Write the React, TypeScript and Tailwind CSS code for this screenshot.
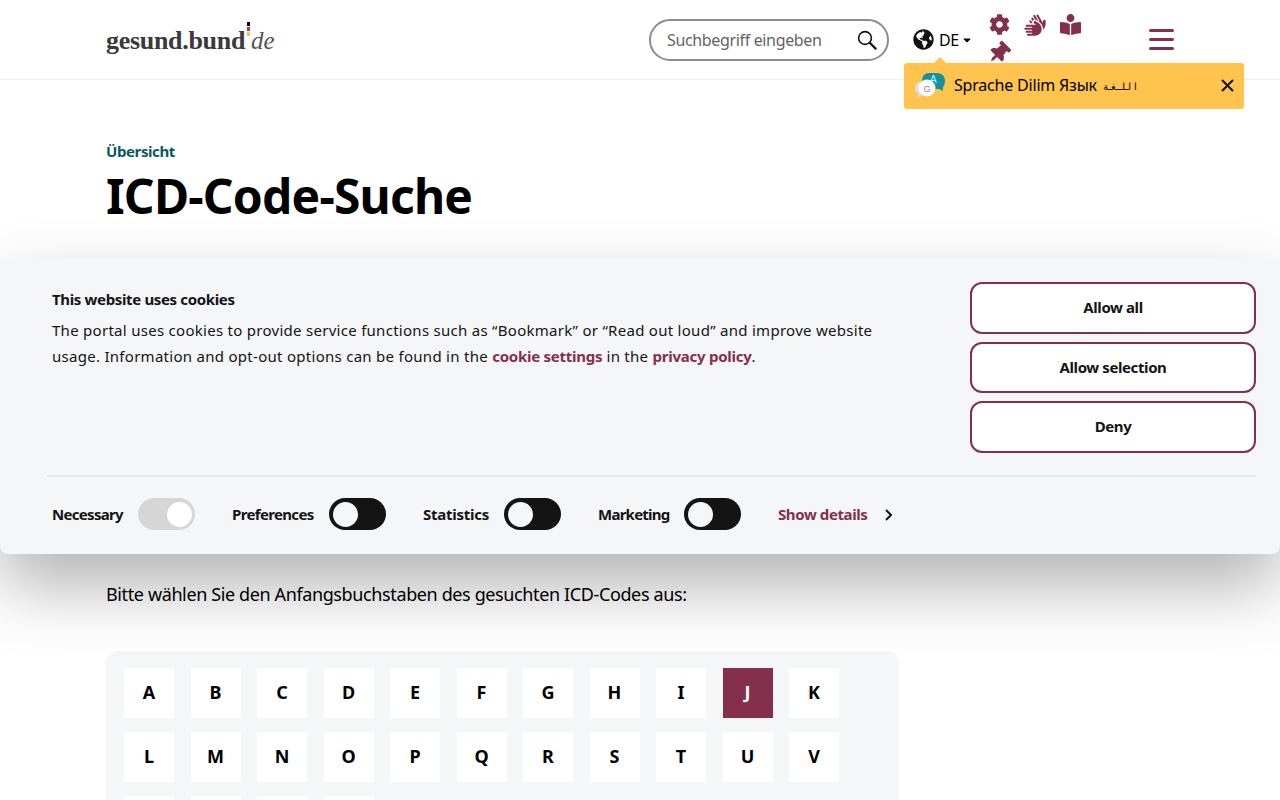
import { FaCog, FaBookReader, FaThumbtack, FaGlobeAmericas, FaCaretDown } from 'react-icons/fa'
import { FaHands } from 'react-icons/fa6'

const LETTERS = ['A','B','C','D','E','F','G','H','I','J','K','L','M','N','O','P','Q','R','S','T','U','V','W','X','Y','Z']

function Toggle({ disabled }: { disabled?: boolean }) {
  if (disabled) {
    return (
      <span className="flex h-8 w-[57px] items-center justify-end rounded-full bg-[#d6d6d6] pr-[3px]">
        <span className="h-[25px] w-[25px] rounded-full bg-white" />
      </span>
    )
  }
  return (
    <span className="flex h-8 w-[57px] items-center rounded-full bg-[#141414] pl-1">
      <span className="h-[25px] w-[25px] rounded-full bg-[#f5f6f8]" />
    </span>
  )
}

function CookieButton({ label }: { label: string }) {
  return (
    <button className="flex h-[51.5px] w-[286px] items-center justify-center rounded-xl border-2 border-[#84304c] bg-white pb-[1px] text-[15px] font-bold tracking-[-0.4px] text-[#141414]">
      {label}
    </button>
  )
}

function ToggleItem({ label, className, disabled }: { label: string; className: string; disabled?: boolean }) {
  return (
    <div className={`flex items-center justify-between pr-[37px] ${className}`}>
      <span className="text-[15px] font-bold text-[#141414]">{label}</span>
      <Toggle disabled={disabled} />
    </div>
  )
}

function TranslateIcon() {
  return (
    <svg width="32" height="28" viewBox="0 0 32 28" className="shrink-0">
      <path d="M15 1h8c5 0 8 3 8 8 0 3-1 5-2 6v4l-4-2H16c-5 0-8-4-8-8 0-5 3-8 7-8z" fill="#12929f" />
      <text x="16" y="11" fontSize="10" fill="#d8f2f5" fontFamily="Liberation Sans, sans-serif">A</text>
      <path d="M7 10c-4 0-6 3-6 6 0 3 1 5 3 6v4l4-3h4V10z" fill="#dedede" />
      <circle cx="13" cy="16" r="8.5" fill="#ffffff" />
      <text x="9.5" y="19.5" fontSize="9" fill="#8a84b8" fontFamily="Liberation Sans, sans-serif">G</text>
    </svg>
  )
}

export default function App() {
  return (
    <div className="relative h-[800px] overflow-hidden bg-white font-['Noto_Sans',sans-serif] text-black">
      {/* Header */}
      <header className="flex h-20 items-center border-b border-[#eeeeee] pl-[106px]">
        <a className="relative flex w-[169px] items-baseline pt-[1px] font-['Liberation_Serif',serif] text-[#3a3a3a]">
          <span className="text-[26px] font-bold tracking-[-0.3px]">gesund.bund</span>
          <span className="ml-[6px] text-[25px] italic text-[#555555]">de</span>
          <span className="absolute left-[141px] top-[2px] flex w-[3px] flex-col gap-[1px]">
            <span className="h-[4px] bg-black" />
            <span className="h-[4px] bg-[#c8382c]" />
            <span className="h-[4px] bg-[#f0c64a]" />
          </span>
        </a>

        <div className="ml-[374px] flex h-[42px] w-[240px] items-center justify-between rounded-full border-2 border-[#8c8c8c] pl-[16px] pr-[10px]">
          <span className="text-[16px] tracking-[-0.35px] text-[#646464]">Suchbegriff eingeben</span>
          <svg width="20" height="20" viewBox="0 0 20 20" fill="none" stroke="#111" strokeWidth="1.6">
            <circle cx="8" cy="8" r="6.4" />
            <path d="M12.8 12.8L18.6 18.6" strokeWidth="2.2" strokeLinecap="round" />
          </svg>
        </div>

        <div className="ml-[24px] flex w-[71px] items-center">
          <FaGlobeAmericas className="h-[21px] w-[21px] shrink-0 text-[#111]" />
          <span className="ml-[5px] text-[16px] tracking-[-0.5px]">DE</span>
          <FaCaretDown className="ml-[2px] h-[12px] w-[12px]" />
        </div>

        <div className="-ml-[2px] grid w-[107px] -translate-y-[1px] grid-cols-3 gap-y-[6px] text-[#84304c]">
          <span className="flex h-[22px] w-[35px] items-center justify-center"><FaCog className="h-[21px] w-[21px]" /></span>
          <span className="flex h-[22px] w-[35px] items-center justify-center"><FaHands className="h-[22px] w-[24px]" /></span>
          <span className="flex h-[22px] w-[35px] items-center justify-center"><FaBookReader className="h-[21px] w-[21px]" /></span>
          <span className="flex h-[22px] w-[35px] items-center justify-center"><FaThumbtack className="h-[22px] w-[22px] -translate-x-[1px] rotate-45" /></span>
        </div>

        <div className="ml-[60px] flex w-[25px] flex-col gap-[6px]">
          <span className="h-[3px] rounded-full bg-[#84304c]" />
          <span className="h-[3px] rounded-full bg-[#84304c]" />
          <span className="h-[3px] rounded-full bg-[#84304c]" />
        </div>
      </header>

      {/* Language hint */}
      <div className="absolute left-[904px] top-[63px] flex h-[46px] w-[340px] items-center rounded-[3px] bg-[#ffc44d] pl-[10px] pr-[10px]">
        <span className="absolute -top-[6px] left-[30px] h-0 w-0 border-x-[6px] border-b-[6px] border-x-transparent border-b-[#ffc44d]" />
        <TranslateIcon />
        <span className="ml-[8px] pb-[2px] text-[16px] tracking-[-0.2px]">Sprache Dilim Язык</span>
        <span className="ml-[6px] font-['DejaVu_Sans',sans-serif] text-[10px] font-light" dir="rtl">ا لـلــغـة</span>
        <svg width="13" height="13" viewBox="0 0 13 13" className="mb-[2px] ml-auto" stroke="#111" strokeWidth="2">
          <path d="M1 1l11 11M12 1L1 12" />
        </svg>
      </div>

      {/* Page content */}
      <main className="px-[106px] pt-[61px]">
        <p className="text-[15px] font-bold leading-5 tracking-[-0.4px] text-[#0a5a5a]">Übersicht</p>
        <h1 className="mt-[7px] text-[48px] font-bold leading-[56px] tracking-[-0.8px]">ICD-Code-Suche</h1>
        <p className="mt-[356px] text-[18px] leading-7 tracking-[-0.38px]">Bitte wählen Sie den Anfangsbuchstaben des gesuchten ICD-Codes aus:</p>
        <div className="mt-[43px] w-[793px] rounded-xl bg-[#f5f6f8] pl-[18px] pt-[17px]">
          <div className="grid grid-cols-[repeat(11,50px)] gap-x-[16.5px] gap-y-[14px]">
            {LETTERS.map(l => (
              <a
                key={l}
                className={`flex h-[50px] w-[50px] items-center justify-center pb-[2px] text-[18px] font-bold ${l === 'J' ? 'bg-[#84304c] text-white' : 'bg-white text-black'}`}
              >
                {l}
              </a>
            ))}
          </div>
        </div>
      </main>

      {/* Cookie banner */}
      <section className="absolute left-0 right-0 top-[258px] h-[296px] rounded-lg bg-[#f5f6f8] pl-[47px] pr-[24px] shadow-[0_32px_68px_rgba(0,0,0,0.3)]">
        <div className="flex h-[219px] items-start justify-between border-b-2 border-[#e6e7ea]">
          <div className="w-[860px] pl-[5px] pt-[31px] text-[#141414]">
            <h2 className="text-[15px] font-bold leading-5 tracking-[-0.35px]">This website uses cookies</h2>
            <p className="mt-[8px] text-[15px] leading-[26px] tracking-[0.28px]">
              The portal uses cookies to provide service functions such as “Bookmark” or “Read out loud” and improve website usage. Information and opt-out options can be found in the{' '}
              <a className="font-bold tracking-[-0.25px] text-[#84304c]">cookie settings</a> in the{' '}
              <a className="font-bold tracking-[-0.25px] text-[#84304c]">privacy policy</a>.
            </p>
          </div>
          <div className="flex flex-col gap-[8px] pt-[24px]">
            <CookieButton label="Allow all" />
            <CookieButton label="Allow selection" />
            <CookieButton label="Deny" />
          </div>
        </div>
        <div className="flex h-[74px] items-center pl-[5px]">
          <ToggleItem label="Necessary" className="w-[180px] tracking-[-0.7px]" disabled />
          <ToggleItem label="Preferences" className="w-[191px] tracking-[-0.65px]" />
          <ToggleItem label="Statistics" className="w-[175px] tracking-[-0.25px]" />
          <ToggleItem label="Marketing" className="w-[180px] tracking-[-0.75px]" />
          <a className="flex w-[114px] items-center justify-between pt-[1px] text-[15px] font-bold tracking-[-0.4px] text-[#84304c]">
            Show details
            <svg width="7" height="12" viewBox="0 0 7 12" fill="none" stroke="#141414" strokeWidth="2"><path d="M1 1l5 5-5 5" /></svg>
          </a>
        </div>
      </section>
    </div>
  )
}
